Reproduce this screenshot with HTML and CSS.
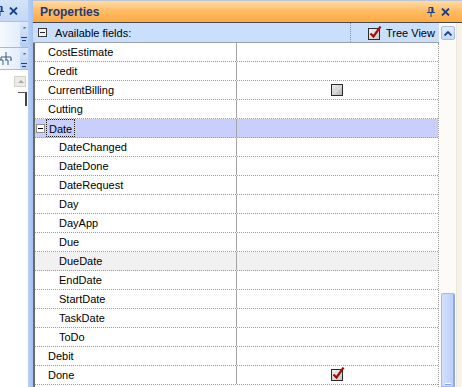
FILE: index.html
```html
<!DOCTYPE html>
<html lang="en">

<head>
    <meta charset="UTF-8">
    <meta name="viewport" content="width=device-width, initial-scale=1.0">
    <title>Properties</title>
    <link rel="stylesheet" href="styles.css">
</head>

<body>
    <div class="app">
        <!-- docked panel on the left, mostly hidden -->
        <div class="side">
            <div class="side-title">
                <svg class="side-pin" width="8" height="10" viewBox="0 0 8 10">
                    <path d="M2 0.5h4v5H2z M1 5.5h7 M4 6v4" fill="none" stroke="#15428b" stroke-width="1"/>
                    <path d="M5.5 0.5v5" stroke="#15428b" stroke-width="1.5"/>
                </svg>
                <svg class="side-close" width="9" height="8" viewBox="0 0 9 8">
                    <path d="M1 0.5l7 7 M8 0.5l-7 7" stroke="#15428b" stroke-width="1.8"/>
                </svg>
            </div>
            <div class="side-tb">
                <div class="tb-more">
                    <span class="tb-chev">&#8227;&#8227;</span>
                    <span class="tb-drop"></span>
                </div>
            </div>
            <div class="side-tb second">
                <svg class="tb-icon" width="12" height="14" viewBox="0 0 12 14">
                    <path d="M6 0v5 M1 5h10 M1 5v3 M6 5v3 M11 5v3 M0 8h3v5 M5 8h3v5 M10 8h2" fill="none" stroke="#3a5a8c" stroke-width="1"/>
                </svg>
                <div class="tb-more">
                    <span class="tb-chev">&#8227;&#8227;</span>
                    <span class="tb-drop"></span>
                </div>
            </div>
            <div class="side-rest">
                <div class="side-up"></div>
                <div class="side-box"></div>
            </div>
        </div>

        <div class="strip"></div>

        <div class="props">
            <div class="props-title">
                <span class="props-name">Properties</span>
                <svg class="title-pin" width="8" height="10" viewBox="0 0 8 10">
                    <path d="M2 0.5h4v5H2z M0 5.5h8 M4 6v4" fill="none" stroke="#15428b" stroke-width="1"/>
                    <path d="M5.2 0.5v5" stroke="#15428b" stroke-width="1.6"/>
                </svg>
                <svg class="title-close" width="9" height="8" viewBox="0 0 9 8">
                    <path d="M1 0.5l7 7 M8 0.5l-7 7" stroke="#15428b" stroke-width="1.8"/>
                </svg>
            </div>

            <div class="props-body">
                <div class="grid">
                    <div class="fields-head">
                        <span class="box-minus"></span>
                        <span class="head-label">Available fields:</span>
                        <div class="head-right">
                            <svg class="check" width="14" height="14" viewBox="0 0 14 14">
                                <defs>
                                    <linearGradient id="cb1" x1="0" y1="0" x2="1" y2="1">
                                        <stop offset="0" stop-color="#f4f4f4"/>
                                        <stop offset="1" stop-color="#c4c4c4"/>
                                    </linearGradient>
                                </defs>
                                <rect x="0.5" y="2.5" width="11" height="11" fill="url(#cb1)" stroke="#2b2b2b"/>
                                <path d="M2.5 7.5l3 3 L12.5 0.5" fill="none" stroke="#a30d0d" stroke-width="2.2"/>
                            </svg>
                            <span>Tree View</span>
                        </div>
                    </div>

                    <div class="rows">
                        <div class="row"><div class="name">CostEstimate</div><div class="value"></div></div>
                        <div class="row"><div class="name">Credit</div><div class="value"></div></div>
                        <div class="row">
                            <div class="name">CurrentBilling</div>
                            <div class="value">
                                <svg class="check" width="14" height="14" viewBox="0 0 14 14">
                                    <defs>
                                        <linearGradient id="cb2" x1="0" y1="0" x2="1" y2="1">
                                            <stop offset="0" stop-color="#f0f0f0"/>
                                            <stop offset="1" stop-color="#b4b4b4"/>
                                        </linearGradient>
                                    </defs>
                                    <rect x="0.5" y="2.5" width="11" height="11" fill="url(#cb2)" stroke="#2b2b2b"/>
                                    <path d="M2 12.5l9-9" stroke="#ffffff" stroke-width="1" stroke-dasharray="1 1"/>
                                </svg>
                            </div>
                        </div>
                        <div class="row"><div class="name">Cutting</div><div class="value"></div></div>
                        <div class="row group">
                            <div class="name"><span class="tree-minus"></span><span class="focus">Date</span></div>
                            <div class="value"></div>
                        </div>
                        <div class="row"><div class="name child">DateChanged</div><div class="value"></div></div>
                        <div class="row"><div class="name child">DateDone</div><div class="value"></div></div>
                        <div class="row"><div class="name child">DateRequest</div><div class="value"></div></div>
                        <div class="row"><div class="name child">Day</div><div class="value"></div></div>
                        <div class="row"><div class="name child">DayApp</div><div class="value"></div></div>
                        <div class="row"><div class="name child">Due</div><div class="value"></div></div>
                        <div class="row hover"><div class="name child">DueDate</div><div class="value"></div></div>
                        <div class="row"><div class="name child">EndDate</div><div class="value"></div></div>
                        <div class="row"><div class="name child">StartDate</div><div class="value"></div></div>
                        <div class="row"><div class="name child">TaskDate</div><div class="value"></div></div>
                        <div class="row"><div class="name child">ToDo</div><div class="value"></div></div>
                        <div class="row"><div class="name">Debit</div><div class="value"></div></div>
                        <div class="row">
                            <div class="name">Done</div>
                            <div class="value">
                                <svg class="check" width="14" height="14" viewBox="0 0 14 14">
                                    <rect x="0.5" y="2.5" width="11" height="11" fill="url(#cb1)" stroke="#2b2b2b"/>
                                    <path d="M2.5 7.5l3 3 L12.5 0.5" fill="none" stroke="#a30d0d" stroke-width="2.2"/>
                                </svg>
                            </div>
                        </div>
                    </div>
                </div>

                <div class="scroll">
                    <div class="scroll-up">
                        <svg width="8" height="5" viewBox="0 0 8 5">
                            <path d="M0.5 4.5l3.5-3.5 3.5 3.5" fill="none" stroke="#15428b" stroke-width="1.8"/>
                        </svg>
                    </div>
                    <div class="scroll-thumb"><span class="grip"></span></div>
                </div>
            </div>
        </div>
    </div>
</body>

</html>
```

FILE: styles.css
```css
* {
    margin: 0;
    padding: 0;
    box-sizing: border-box;
    font-family: 'Liberation Sans', Arial, sans-serif;
}

body {
    width: 462px;
    height: 387px;
    overflow: hidden;
    background-color: #ffffff;
    color: #000;
    font-size: 11px;
}

.app {
    display: flex;
    height: 387px;
}

/* left docked panel */
.side {
    width: 28px;
    display: flex;
    flex-direction: column;
    background-color: #fff;
    overflow: hidden;
}

.side-title {
    height: 22px;
    display: flex;
    align-items: center;
    background: linear-gradient(#d3e3f9, #c3d8f5);
    border-bottom: 1px solid #a9c2e8;
}

.side-pin {
    margin-left: -4px;
}

.side-close {
    margin-left: 5px;
}

.side-tb {
    height: 26px;
    display: flex;
    background: linear-gradient(90deg, #f6f9fe, #dbe8fb);
    border-bottom: 1px solid #9fbbe4;
}

.side-tb.second {
    height: 22px;
}

.tb-icon {
    margin: 4px 0 0 0;
}

.tb-more {
    margin-left: auto;
    width: 8px;
    display: flex;
    flex-direction: column;
    align-items: center;
    background: linear-gradient(#dce9fb, #b5cdf3);
    border-radius: 2px 0 0 2px;
}

.tb-chev {
    font-size: 6px;
    line-height: 8px;
    color: #15428b;
    letter-spacing: -1px;
    margin-top: 2px;
}

.tb-drop {
    margin-top: 5px;
    width: 6px;
    height: 4px;
    border-top: 1px solid #15428b;
    background: linear-gradient(#15428b, #15428b) center 2px / 4px 2px no-repeat;
}

.side-rest {
    flex: 1;
    position: relative;
}

.side-up {
    position: absolute;
    left: 14px;
    top: 6px;
    width: 12px;
    height: 11px;
    background: #ecebe6;
    border: 1px solid #d4d2c8;
}

.side-up::after {
    content: "";
    position: absolute;
    left: 3px;
    top: 3px;
    border-left: 3px solid transparent;
    border-right: 3px solid transparent;
    border-bottom: 3px solid #a8a8a8;
}

.side-box {
    position: absolute;
    left: 18px;
    top: 22px;
    width: 9px;
    height: 14px;
    border-top: 1px solid #555;
    border-right: 2px solid #444;
}

.strip {
    width: 5px;
    background: linear-gradient(90deg, #b8d0f5, #a3c1f0);
}

/* properties window */
.props {
    flex: 1;
    display: flex;
    flex-direction: column;
    min-width: 0;
}

.props-title {
    height: 23px;
    display: flex;
    align-items: center;
    padding: 0 12px 0 7px;
    background: linear-gradient(#ffdca6 0%, #ffbd69 45%, #ffa940 100%);
    border-top: 1px solid #b9c6da;
    border-bottom: 1px solid #45484f;
}

.props-name {
    font-size: 12px;
    font-weight: bold;
    color: #1b3c7a;
}

.title-pin {
    margin-left: auto;
}

.title-close {
    margin-left: 6px;
}

.props-body {
    flex: 1;
    display: flex;
    min-height: 0;
}

.grid {
    width: 406px;
    display: flex;
    flex-direction: column;
}

.fields-head {
    height: 20px;
    display: flex;
    align-items: center;
    background-color: #c9dffc;
    border-bottom: 1px solid #9c9fa6;
}

.box-minus {
    width: 9px;
    height: 9px;
    margin-left: 5px;
    border: 1px solid #3a3a3a;
    background: linear-gradient(#2a2a2a, #2a2a2a) center / 5px 1px no-repeat, #f2f2f2;
}

.head-label {
    margin-left: 8px;
    padding-top: 1px;
}

.head-right {
    margin-left: auto;
    width: 89px;
    height: 19px;
    display: flex;
    align-items: center;
    padding-left: 17px;
    border-left: 1px dotted #8d8d8d;
}

.head-right span {
    margin-left: 4px;
    padding-top: 1px;
}

.rows {
    flex: 1;
    border-left: 2px solid #6a6a6a;
    border-right: 1px dotted #9a9a9a;
}

.row {
    height: 19px;
    display: flex;
    border-bottom: 1px dotted #9a9a9a;
}

.row.group {
    background-color: #c8cffd;
}

.row.hover {
    background-color: #f1f1f1;
}

.name {
    width: 202px;
    display: flex;
    align-items: center;
    padding: 1px 0 0 13px;
    line-height: 17px;
    border-right: 1px solid #a4a4a4;
}

.name.child {
    padding-left: 24px;
}

.row.group .name {
    padding: 0 0 0 1px;
}

.tree-minus {
    width: 9px;
    height: 9px;
    border: 1px solid #8e8e8e;
    background: linear-gradient(#000, #000) center / 5px 1px no-repeat, #fff;
}

.focus {
    margin-left: 1px;
    padding: 1px 2px 0;
    height: 18px;
    border: 1px dotted #222;
}

.value {
    flex: 1;
    display: flex;
    align-items: center;
    justify-content: center;
}

.value .check {
    margin-top: -2px;
}

/* vertical scrollbar */
.scroll {
    flex: 1;
    display: flex;
    flex-direction: column;
    padding: 3px 0 0 2px;
    background: linear-gradient(90deg, #fcfbf8 0, #fcfbf8 17px, #ece6d8 17px, #ece6d8 18px, #f6f2e9 18px);
}

.scroll-up {
    width: 14px;
    height: 14px;
    display: flex;
    align-items: center;
    justify-content: center;
    background: linear-gradient(#e4edfd, #c4d6fb);
    border: 1px solid #a5bcec;
    border-radius: 2px;
}

.scroll-thumb {
    margin-top: auto;
    width: 14px;
    height: 94px;
    display: flex;
    align-items: flex-end;
    justify-content: center;
    background: linear-gradient(90deg, #d2e0fd, #bcd0fb);
    border: 1px solid #a3bbee;
    border-right: 2px solid #8fa8de;
    border-radius: 2px 2px 0 0;
}

.grip {
    width: 6px;
    height: 2px;
    margin-bottom: 1px;
    border-top: 1px solid #fff;
    border-bottom: 1px solid #8ea6dc;
}
```
